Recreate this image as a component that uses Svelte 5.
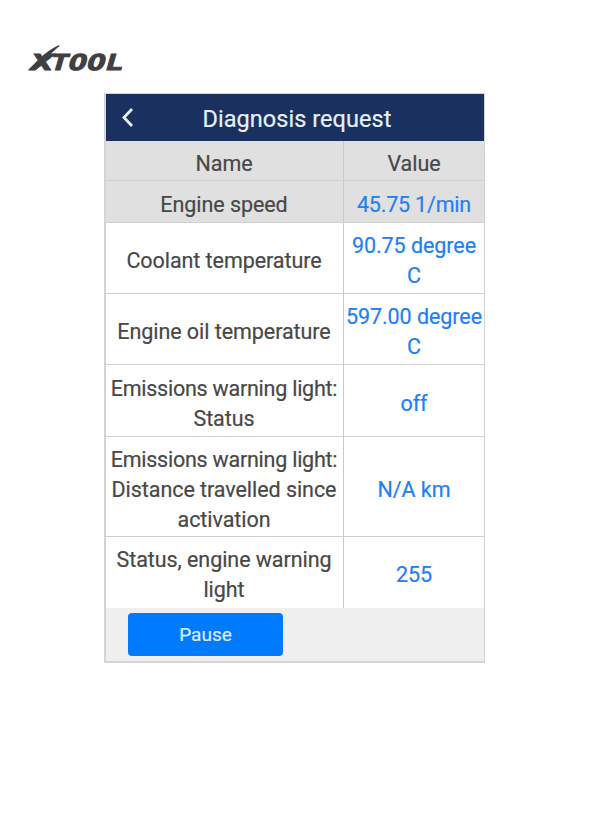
<script>
	let paused = $state(false);

	const rows = [
		{ name: ['Engine speed'], value: ['45.75 1/min'], size: 'speed' },
		{ name: ['Coolant temperature'], value: ['90.75 degree', 'C'], size: 'two' },
		{ name: ['Engine oil temperature'], value: ['597.00 degree', 'C'], size: 'two' },
		{ name: ['Emissions warning light:', 'Status'], value: ['off'], size: 'status' },
		{ name: ['Emissions warning light:', 'Distance travelled since', 'activation'], value: ['N/A km'], size: 'three' },
		{ name: ['Status, engine warning', 'light'], value: ['255'], size: 'last' }
	];
</script>

<div class="page">
	<svg class="logo" width="104" height="34" viewBox="0 0 104 34" role="img" aria-label="XTOOL">
		<g transform="translate(4 29.5) skewX(-16)">
			<text class="brand" x="1" y="0" textLength="22" lengthAdjust="spacingAndGlyphs">X</text>
			<text class="brand" x="20.5" y="0" textLength="73.5" lengthAdjust="spacingAndGlyphs">TOOL</text>
		</g>
		<path d="M4 30 L14 20 Q24 10 35 5 L35.500 6 Q26 14 20 21 L17 23 L11 30 Z" />
	</svg>

	<main class="device">
		<header>
			<button class="back" aria-label="Back">
				<svg width="14" height="20" viewBox="0 0 14 20">
					<path d="M12 1 L4 9.500 L12 18" />
				</svg>
			</button>
			<h1>Diagnosis request</h1>
		</header>

		<div class="row head">
			<div class="name">Name</div>
			<div class="value">Value</div>
		</div>
		{#each rows as row}
			<div class="row {row.size}">
				<div class="name">
					{#each row.name as line}<span class:warning={line.startsWith('Emissions')}>{line}</span>{/each}
				</div>
				<div class="value">
					{#each row.value as line}<span>{line}</span>{/each}
				</div>
			</div>
		{/each}

		<footer>
			<button class="pause" onclick={() => (paused = !paused)}>{paused ? 'Resume' : 'Pause'}</button>
		</footer>
	</main>
</div>

<style>
	:global(body) {
		background: #fff;
	}

	.page {
		padding: 40px 0 0 24px;
		font-family: Roboto, sans-serif;
	}

	.logo {
		display: block;
		fill: #404042;
		overflow: visible;
	}

	.brand {
		font: bold 22px 'DejaVu Sans Mono', monospace;
		stroke: #404042;
		stroke-width: 0.9px;
	}

	.device {
		box-sizing: border-box;
		width: 381px;
		height: 570px;
		margin: 19px 0 0 80px;
		border: solid #d4d4d4;
		border-width: 1px 1px 2px 2px;
		color: #484848;
		font-size: 21.5px;
		line-height: 30px;
		letter-spacing: -0.06px;
		-webkit-text-stroke: 0.2px;
	}

	header {
		display: grid;
		grid-template-columns: 44px 1fr 40px;
		align-items: center;
		height: 47px;
		background: #1a305f;
		color: #e6effc;
	}

	h1 {
		margin: 2px 0 0;
		font-size: 23.5px;
		font-weight: 400;
		letter-spacing: 0.05px;
		text-align: center;
	}

	button {
		padding: 0;
		border: 0;
		font-family: inherit;
	}

	.back {
		display: flex;
		margin-left: 14px;
		background: none;
	}

	.back path {
		fill: none;
		stroke: #e6effc;
		stroke-width: 2.8;
	}

	.row {
		display: grid;
		grid-template-columns: 237px 141px;
		box-sizing: border-box;
		height: 71px;
		border-bottom: 1px solid #d0d0d0;
		text-align: center;
	}

	.name,
	.value {
		display: flex;
		flex-direction: column;
		justify-content: center;
		padding-top: 6px;
		white-space: nowrap;
	}

	.name {
		padding-right: 1px;
	}

	.warning {
		letter-spacing: -0.24px;
	}

	.value {
		border-left: 1px solid #cacaca;
		color: #2180f5;
	}

	.head,
	.speed {
		background: #e0e0e0;
	}

	.head {
		height: 40px;
	}

	.head .value {
		color: #484848;
	}

	.speed {
		height: 42px;
	}

	.speed .value {
		letter-spacing: -0.2px;
	}

	.status {
		height: 72px;
	}

	.three {
		height: 100px;
	}

	.last {
		border-bottom: 0;
	}

	.last .name,
	.last .value {
		padding-top: 4px;
	}

	footer {
		box-sizing: border-box;
		height: 53px;
		padding: 5px 0 0 22px;
		background: #efefef;
	}

	.pause {
		width: 155px;
		height: 43px;
		border-radius: 4px;
		background: #007bff;
		color: #dcecff;
		font-size: 19px;
		-webkit-text-stroke: 0.2px;
	}
</style>
